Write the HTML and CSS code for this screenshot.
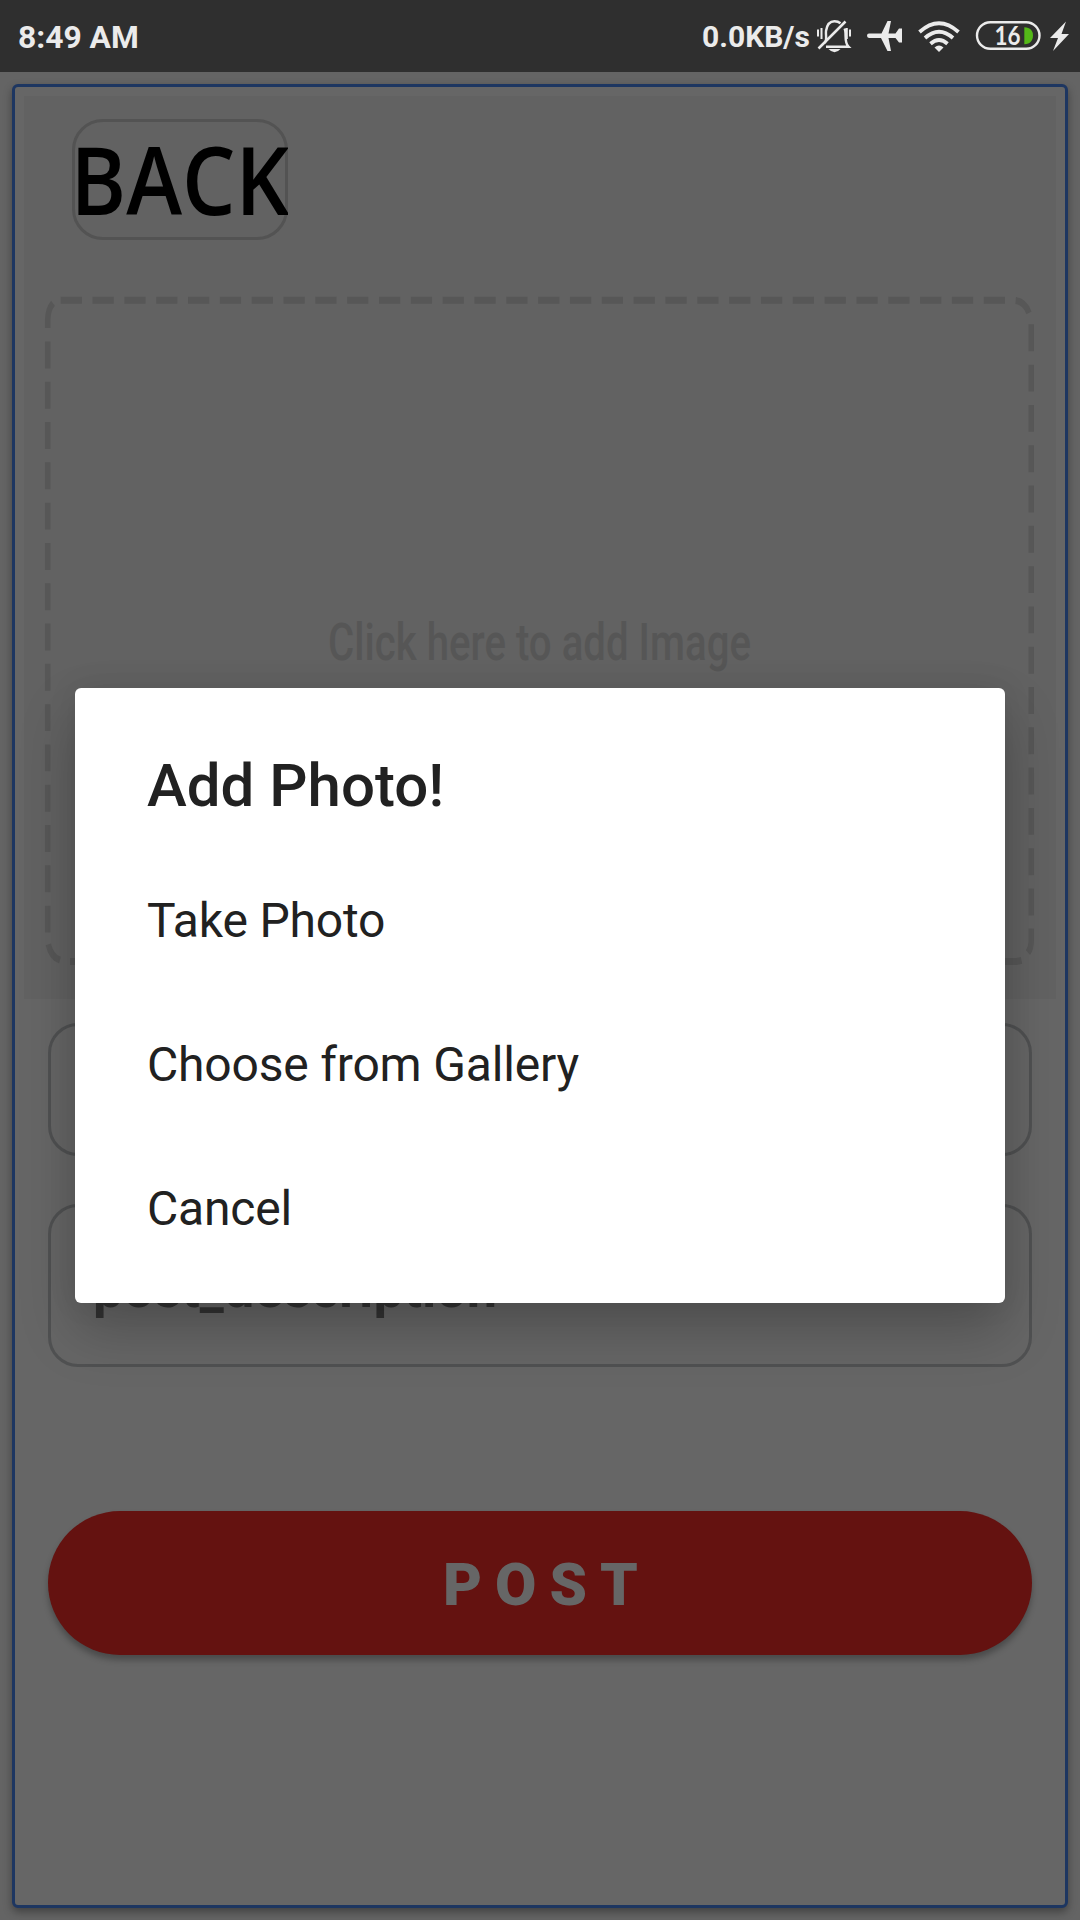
FILE: index.html
```html
<!DOCTYPE html>
<html lang="en">
<head>
<meta charset="utf-8">
<title>New post</title>
<link rel="stylesheet" href="styles.css">
</head>
<body>
<div class="screen">
  <header class="status-bar">
    <span class="clock">8:49 AM</span>
    <span class="speed">0.0KB/s</span>
    <svg class="status-icons" viewBox="812 0 268 72" width="268" height="72">
      <g fill="none" stroke="#ebebeb" stroke-width="2.400">
        <path d="M824.5 43C827.5 40 825.500 36 826 31C827 24 830 21.200 834.500 21.200Q838 21.200 840.500 23.200M844.500 28.500C847 33 843.500 42 848.500 46.700H826"/>
        <path d="M818.500 48.500L845.500 21.500" stroke-width="2.500"/>
        <path d="M818 29.500V36.500M821.500 28V39M846.800 28V39M850 29.500V36.500" stroke-width="2"/>
      </g>
      <path fill="#ebebeb" d="M828.500 49H840.500Q834.500 55.500 828.500 49Z"/>
      <path fill="#ebebeb" d="M869 33.500H881.500L887.500 21H891L888.500 33.500H895.500L899 28.500H902V42.500H899L895.500 38H888.500L891 51H887.500L881 38H869Q867 37.800 867 35.700Q867 33.500 869 33.500Z"/>
      <g fill="none" stroke="#ebebeb" stroke-width="3.800">
        <path d="M919.500 32Q939 14.500 958.500 32"/>
        <path d="M925 38Q939 25.500 953 38"/>
        <path d="M930.500 43.700Q939 36.300 947.500 43.700"/>
      </g>
      <path fill="#ebebeb" d="M934.500 47.500Q939 43.500 943.500 47.500L939 52Z"/>
      <rect x="977" y="22.200" width="62.500" height="26.600" rx="13.300" fill="none" stroke="#ebebeb" stroke-width="2.400"/>
      <path fill="#54b818" d="M1024.300 27.300C1030.500 27.300 1033 31 1033 35.500S1030.500 44.300 1024.300 44.300Z"/>
      <text class="battery-level" x="994.500" y="44.700" textLength="26" lengthAdjust="spacingAndGlyphs">16</text>
      <path fill="#ebebeb" d="M1066 21.500L1050 38H1058L1053 51L1069 34H1061.500Z"/>
    </svg>
  </header>

  <main class="page">
    <section class="card">
      <div class="picker">
        <button class="back"><svg width="216" height="121" viewBox="0 0 216 121"><text class="back-label" x="-1.500" y="96.300" textLength="219" lengthAdjust="spacingAndGlyphs">BACK</text></svg></button>
        <svg class="drop-zone" width="1032" height="733" viewBox="0 170 1032 733">
          <g transform="scale(1 1.27)">
            <g class="outline">
              <path class="dashed-h" d="M36.700 160.900H982"/>
              <path d="M991.700 161Q1001 162 1005 170.800"/>
              <path class="dashed-v" d="M1007.200 179.800V646"/>
              <path d="M1007.200 655.600V666Q1007.200 671 1004 674.500"/>
              <path d="M997.500 680.600Q994 681.500 990 681.500H976.500"/>
              <path class="dashed-h" d="M46 681.500H965"/>
              <path d="M36 680.500Q27 678 24.300 668"/>
              <path class="dashed-v" d="M23.700 658.700V192.500"/>
              <path d="M23.700 182.700V176Q24 168 29 163.200"/>
            </g>
            <text class="hint" x="304" y="444.200" textLength="423" lengthAdjust="spacingAndGlyphs">Click here to add Image</text>
          </g>
        </svg>
      </div>
      <div class="form">
        <div class="field field-title"></div>
        <div class="field field-description">post_description</div>
        <button class="post">POST</button>
      </div>
    </section>
  </main>

  <div class="overlay">
    <div class="dialog" role="dialog">
      <h1 class="dialog-title">Add Photo!</h1>
      <ul class="options">
        <li class="option">Take Photo</li>
        <li class="option">Choose from Gallery</li>
        <li class="option">Cancel</li>
      </ul>
    </div>
  </div>
</div>
</body>
</html>
```

FILE: styles.css
```css
* { box-sizing: border-box; margin: 0; padding: 0; }
body { font-family: Roboto, sans-serif; background: #646464; }
.screen { position: relative; width: 1080px; height: 1920px; display: flex; flex-direction: column; overflow: hidden; }

.status-bar { height: 72px; flex: none; display: flex; align-items: center; background: #2f2f2f; color: #ebebeb; font-weight: 700; line-height: 36px; }
.clock { padding-left: 18px; padding-top: 2px; flex: 1; font-size: 31.8px; }
.speed { width: 110px; padding-top: 1px; font-size: 30px; }
.status-icons { display: block; flex: none; }
.battery-level { font: 700 26px Lato, sans-serif; fill: #ebebeb; }

.page { flex: 1; display: flex; padding: 12px; }
.card { flex: 1; border: 3px solid #1d3661; border-radius: 6px; background: #666; padding: 9px; box-shadow: 0 4px 9px rgba(0, 0, 0, .35); }

.picker { height: 903px; background: #626262; padding-top: 23px; }
.back { display: block; position: relative; width: 216px; height: 121px; margin: 0 0 26px 48px; border: 0; background: none; }
.back::before { content: ""; position: absolute; inset: 0; border: 3px solid #535353; border-radius: 31px; }
.back svg { display: block; position: relative; overflow: hidden; }
.back-label { font: 600 93.5px "Open Sans", "Noto Sans", sans-serif; fill: #000; }
.drop-zone { display: block; }
.outline { fill: none; stroke: #575757; stroke-width: 5.5; }
.dashed-h { stroke-dasharray: 21.2 10.63; }
.dashed-v { stroke-dasharray: 21.2 10.53; }
.hint { font-size: 41px; font-weight: 500; fill: #565656; }

.form { display: flex; flex-direction: column; padding: 24px 24px 0; }
.field { border: 3px solid #505152; border-radius: 30px; }
.field-title { height: 133px; }
.field-description { height: 163px; margin-top: 48px; padding: 51px 42px 0; font-size: 54px; font-weight: 700; line-height: 61px; color: #333; }
.post { height: 144px; margin-top: 144px; padding: 4px 0 0 14px; border: 0; border-radius: 72px; background: #641210; color: #666; font: 900 60px/70px Roboto, sans-serif; letter-spacing: 13px; box-shadow: 0 5px 6px rgba(0, 0, 0, .28); }

.overlay { position: absolute; inset: 70px 0 0; display: flex; align-items: center; justify-content: center; }
.dialog { width: 930px; height: 615px; border-radius: 6px; background: #fff; color: #212121; box-shadow: 0 28px 56px rgba(0, 0, 0, .22), 0 0 30px rgba(0, 0, 0, .08); }
.dialog-title { padding: 63px 72px 27px; font-size: 60px; font-weight: 500; line-height: 70px; }
.options { list-style: none; }
.option { height: 144px; padding: 0 72px; font-size: 48px; line-height: 145px; letter-spacing: -.18px; }
```
